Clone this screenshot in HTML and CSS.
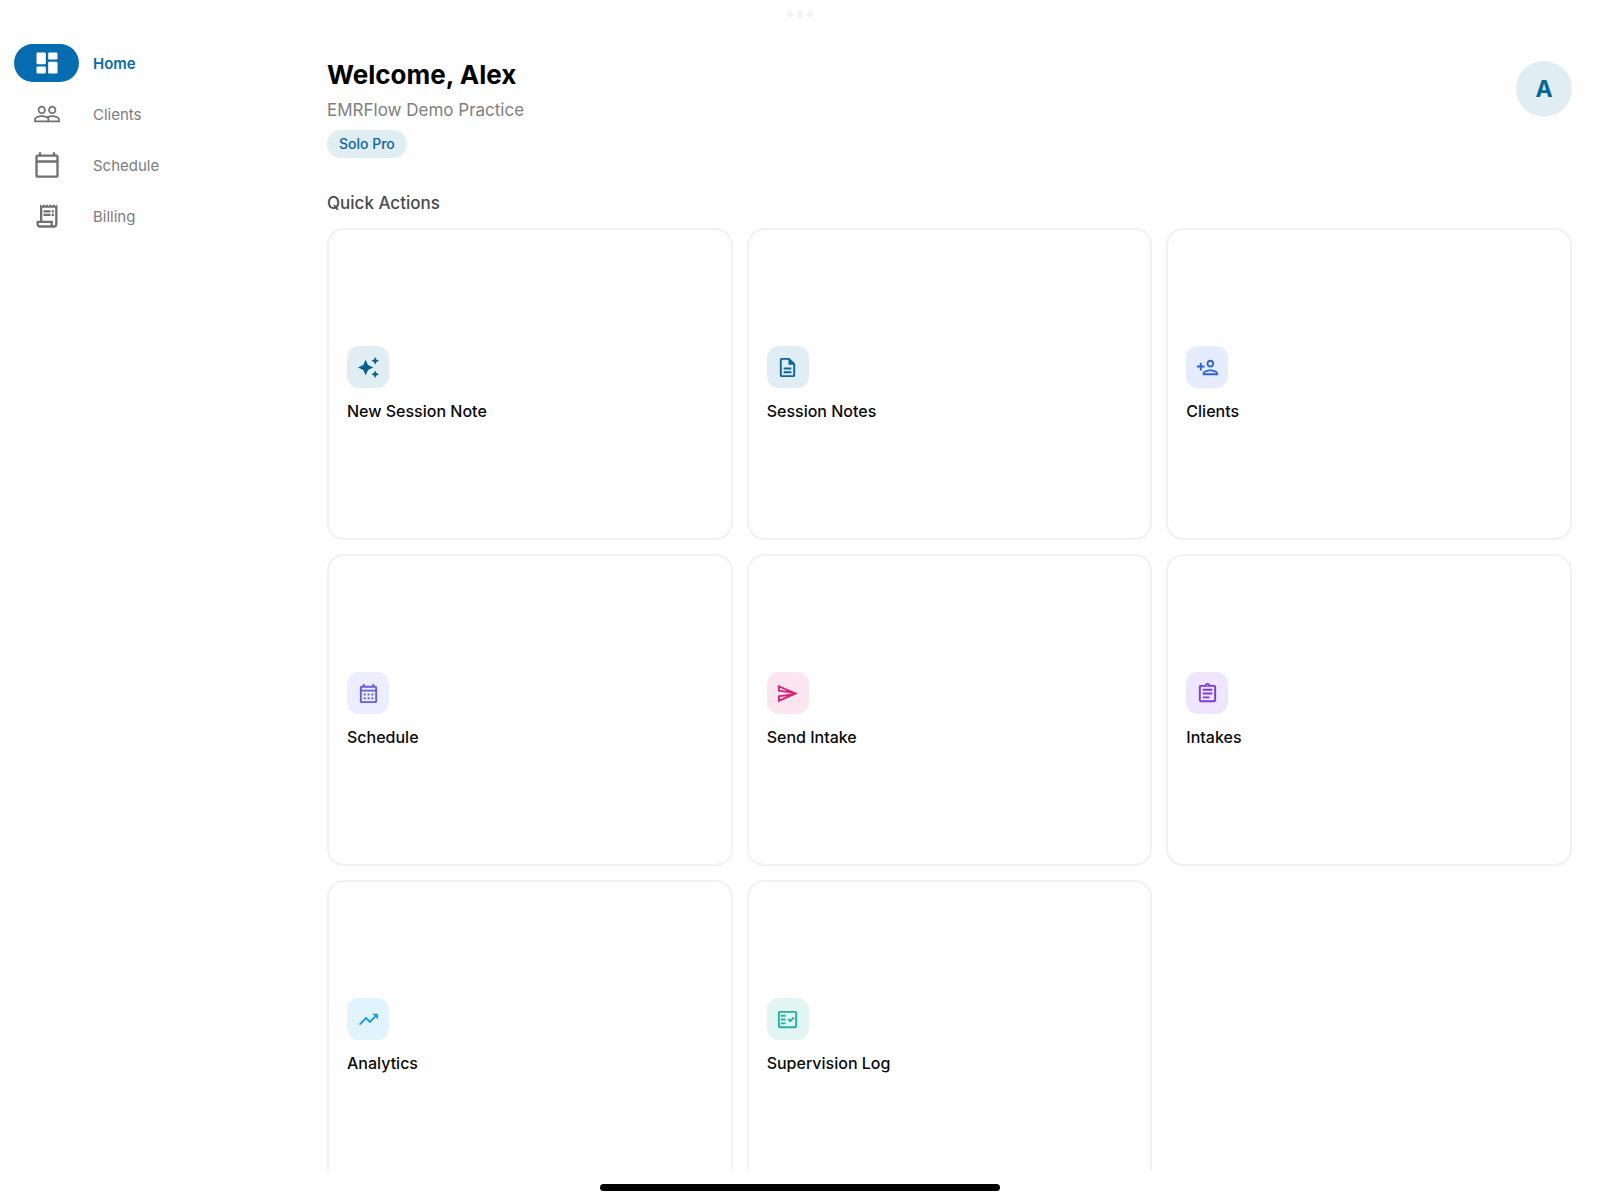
FILE: index.html
```html
<!DOCTYPE html>
<html lang="en">
<head>
    <meta charset="UTF-8">
    <meta name="viewport" content="width=device-width, initial-scale=1.0">
    <title>EMRFlow - Home</title>
    <link rel="stylesheet" href="styles.css">
</head>
<body>
    <div class="window-dots"><span></span><span></span><span></span></div>

    <div class="app">
        <nav class="sidebar">
            <a href="#home" class="nav-item active">
                <span class="nav-icon">
                    <svg viewBox="0 0 24 24"><rect x="3" y="3" width="8" height="10" rx="1"/><rect x="3" y="15" width="8" height="6" rx="1"/><rect x="13" y="3" width="8" height="6" rx="1"/><rect x="13" y="11" width="8" height="10" rx="1"/></svg>
                </span>
                Home
            </a>
            <a href="#clients" class="nav-item">
                <span class="nav-icon">
                    <svg viewBox="0 0 24 24"><path d="M16.5 13c-1.2 0-3.07.34-4.5 1-1.43-.67-3.3-1-4.5-1C5.33 13 1 14.08 1 16.25V19h22v-2.75c0-2.17-4.33-3.25-6.5-3.25zm-4 4.5h-10v-1.25c0-.54 2.56-1.75 5-1.75s5 1.21 5 1.75v1.25zm9 0H14v-1.25c0-.46-.2-.86-.52-1.22.88-.3 1.96-.53 3.02-.53 2.44 0 5 1.21 5 1.75v1.25zM7.5 12c1.93 0 3.5-1.57 3.5-3.5S9.43 5 7.5 5 4 6.57 4 8.5 5.57 12 7.5 12zm0-5.5c1.1 0 2 .9 2 2s-.9 2-2 2-2-.9-2-2 .9-2 2-2zm9 5.5c1.93 0 3.5-1.57 3.5-3.5S18.43 5 16.5 5 13 6.57 13 8.5s1.57 3.5 3.5 3.5zm0-5.5c1.1 0 2 .9 2 2s-.9 2-2 2-2-.9-2-2 .9-2 2-2z"/></svg>
                </span>
                Clients
            </a>
            <a href="#schedule" class="nav-item">
                <span class="nav-icon">
                    <svg viewBox="0 0 24 24"><path d="M20 3h-1V1h-2v2H7V1H5v2H4c-1.1 0-2 .9-2 2v16c0 1.1.9 2 2 2h16c1.1 0 2-.9 2-2V5c0-1.1-.9-2-2-2zm0 18H4V10h16v11zm0-13H4V5h16v3z"/></svg>
                </span>
                Schedule
            </a>
            <a href="#billing" class="nav-item">
                <span class="nav-icon">
                    <svg viewBox="0 0 24 24"><path d="M19.5 3.5L18 2l-1.5 1.5L15 2l-1.5 1.5L12 2l-1.5 1.5L9 2 7.5 3.5 6 2v14H3v3c0 1.66 1.34 3 3 3h12c1.66 0 3-1.34 3-3V2l-1.5 1.5zM15 20H6c-.55 0-1-.45-1-1v-1h10v2zm4-1c0 .55-.45 1-1 1s-1-.45-1-1v-3H8V5h11v14z"/><path d="M9 7h6v2H9zM16 7h2v2h-2zM9 10h6v2H9zM16 10h2v2h-2z"/></svg>
                </span>
                Billing
            </a>
        </nav>

        <main class="content">
            <header class="header">
                <div>
                    <h1>Welcome, Alex</h1>
                    <p class="practice">EMRFlow Demo Practice</p>
                    <span class="plan">Solo Pro</span>
                </div>
                <button class="avatar" aria-label="Account">A</button>
            </header>

            <h2>Quick Actions</h2>
            <div class="actions">
                <button class="card">
                    <span class="tile teal"><svg viewBox="0 0 24 24"><path d="M19 9l1.25-2.75L23 5l-2.75-1.25L19 1l-1.25 2.75L15 5l2.75 1.25L19 9zm-7.5.5L9 4 6.5 9.5 1 12l5.5 2.5L9 20l2.5-5.5L17 12l-5.5-2.5zM19 15l-1.25 2.75L15 19l2.75 1.25L19 23l1.25-2.75L23 19l-2.75-1.25L19 15z"/></svg></span>
                    New Session Note
                </button>
                <button class="card">
                    <span class="tile ocean"><svg viewBox="0 0 24 24"><path d="M8 16h8v2H8zm0-4h8v2H8zm6-10H6c-1.1 0-2 .9-2 2v16c0 1.1.89 2 1.99 2H18c1.1 0 2-.9 2-2V8l-6-6zm4 18H6V4h7v5h5v11z"/></svg></span>
                    Session Notes
                </button>
                <button class="card">
                    <span class="tile blue"><svg viewBox="0 0 24 24"><path d="M15 12c2.21 0 4-1.79 4-4s-1.79-4-4-4-4 1.79-4 4 1.79 4 4 4zm0-6c1.1 0 2 .9 2 2s-.9 2-2 2-2-.9-2-2 .9-2 2-2zm0 8c-2.67 0-8 1.34-8 4v2h16v-2c0-2.66-5.33-4-8-4zm-6 4c.22-.72 3.31-2 6-2 2.7 0 5.8 1.29 6 2H9zm-3-3v-3h3v-2H6V7H4v3H1v2h3v3h2z"/></svg></span>
                    Clients
                </button>
                <button class="card">
                    <span class="tile indigo"><svg viewBox="0 0 24 24"><path d="M19 4h-1V2h-2v2H8V2H6v2H5c-1.11 0-1.99.9-1.99 2L3 20c0 1.1.89 2 2 2h14c1.1 0 2-.9 2-2V6c0-1.1-.9-2-2-2zm0 16H5V10h14v10zm0-12H5V6h14v2zM9 14H7v-2h2v2zm4 0h-2v-2h2v2zm4 0h-2v-2h2v2zm-8 4H7v-2h2v2zm4 0h-2v-2h2v2zm4 0h-2v-2h2v2z"/></svg></span>
                    Schedule
                </button>
                <button class="card">
                    <span class="tile pink"><svg viewBox="0 0 24 24"><path d="M4.01 6.03l7.51 3.22-7.52-1 .01-2.22m7.5 8.72L4 17.97v-2.22l7.51-1M2.01 3L2 10l15 2-15 2 .01 7L23 12 2.01 3z"/></svg></span>
                    Send Intake
                </button>
                <button class="card">
                    <span class="tile purple"><svg viewBox="0 0 24 24"><path d="M7 15h7v2H7zm0-4h10v2H7zm0-4h10v2H7zm12-4h-4.18C14.4 1.84 13.3 1 12 1c-1.3 0-2.4.84-2.82 2H5c-.14 0-.27.01-.4.04-.39.08-.74.28-1.01.55-.18.18-.33.4-.43.64-.1.23-.16.49-.16.77v14c0 .27.06.54.16.78s.25.45.43.64c.27.27.62.47 1.01.55.13.02.26.03.4.03h14c1.1 0 2-.9 2-2V5c0-1.1-.9-2-2-2zm-7-.25c.41 0 .75.34.75.75s-.34.75-.75.75-.75-.34-.75-.75.34-.75.75-.75zM19 19H5V5h14v14z"/></svg></span>
                    Intakes
                </button>
                <button class="card">
                    <span class="tile sky"><svg viewBox="0 0 24 24"><path d="M16 6l2.29 2.29-4.88 4.88-4-4L2 16.59 3.41 18l6-6 4 4 6.3-6.29L22 12V6z"/></svg></span>
                    Analytics
                </button>
                <button class="card">
                    <span class="tile green"><svg viewBox="0 0 24 24"><path d="M20 3H4c-1.1 0-2 .9-2 2v14c0 1.1.9 2 2 2h16c1.1 0 2-.9 2-2V5c0-1.1-.9-2-2-2zm0 16H4V5h16v14z"/><path d="M19.41 10.42L17.99 9l-3.17 3.17-1.41-1.42L12 12.16 14.82 15zM5 7h5v2H5zM5 11h5v2H5zM5 15h5v2H5z"/></svg></span>
                    Supervision Log
                </button>
            </div>
        </main>
    </div>

    <footer class="home-bar"><span></span></footer>
</body>
</html>
```

FILE: styles.css
```css
* {
    box-sizing: border-box;
}
body {
    margin: 0;
    height: 100vh;
    display: flex;
    flex-direction: column;
    background: #fefefe;
    color: #0a0a0a;
    font-family: Inter, "Liberation Sans", sans-serif;
}
h1, h2, p {
    margin: 0;
}
button {
    font-family: inherit;
    border: none;
    cursor: pointer;
}
svg {
    display: block;
    fill: currentColor;
}

.window-dots {
    display: flex;
    justify-content: center;
    gap: 4px;
    height: 28px;
    align-items: center;
}
.window-dots span {
    width: 6px;
    height: 6px;
    border-radius: 50%;
    background: #f3f3f3;
}

.app {
    flex: 1;
    min-height: 0;
    display: flex;
}

/* sidebar */
.sidebar {
    width: 299px;
    flex-shrink: 0;
    padding: 16px 14px;
    display: flex;
    flex-direction: column;
    gap: 13px;
}
.nav-item {
    display: flex;
    align-items: center;
    gap: 14px;
    color: #7d7d7d;
    font-size: 15px;
    text-decoration: none;
}
.nav-icon {
    width: 65px;
    height: 38px;
    border-radius: 19px;
    display: flex;
    align-items: center;
    justify-content: center;
    color: #707070;
}
.nav-icon svg {
    width: 28px;
    height: 28px;
}
.nav-item.active {
    color: #086bac;
    font-weight: 600;
}
.nav-item.active .nav-icon {
    background: #066cb0;
    color: #fff;
}

/* main area */
.content {
    flex: 1;
    padding: 33px 28px;
    overflow-y: auto;
    scrollbar-width: none;
}
.header {
    display: flex;
    justify-content: space-between;
    align-items: flex-start;
}
h1 {
    font-size: 26px;
    line-height: 28px;
    font-weight: 700;
    color: #000;
}
.practice {
    margin-top: 10px;
    font-size: 17px;
    line-height: 22px;
    color: #808080;
}
.plan {
    display: block;
    width: fit-content;
    margin-top: 9px;
    padding: 0 12px;
    border-radius: 14px;
    background: #e0edf3;
    color: #0c6699;
    font-size: 14px;
    line-height: 28px;
    font-weight: 500;
}
.avatar {
    width: 56px;
    height: 56px;
    padding: 0;
    border-radius: 50%;
    background: #e0edf3;
    color: #076595;
    font-size: 23px;
    font-weight: 700;
}
h2 {
    margin: 33px 0 13px;
    font-size: 17px;
    line-height: 24px;
    font-weight: 500;
    color: #4a4a4a;
}

.actions {
    display: grid;
    grid-template-columns: repeat(3, 1fr);
    gap: 14px;
}
.card {
    aspect-ratio: 1.3;
    padding: 0 18px;
    display: flex;
    flex-direction: column;
    justify-content: center;
    align-items: flex-start;
    gap: 12px;
    background: #fefefe;
    border: 2px solid #f1f1f1;
    border-radius: 17px;
    color: #0a0a0a;
    font-size: 16px;
    line-height: 22px;
    font-weight: 500;
}
.tile {
    width: 42px;
    height: 42px;
    border-radius: 12px;
    display: flex;
    align-items: center;
    justify-content: center;
}
.tile svg {
    width: 23px;
    height: 23px;
}
.teal { background: #e0edf2; color: #06608f; }
.ocean { background: #e0edf5; color: #0a669c; }
.blue { background: #e5ecfd; color: #2f63d8; }
.indigo { background: #ecedfd; color: #6260d8; }
.pink { background: #fbe5ef; color: #d62478; }
.purple { background: #efe6fd; color: #7a3bdb; }
.sky { background: #e1f3fc; color: #219cdb; }
.green { background: #e2f5f3; color: #20b2a2; }

/* bottom home indicator */
.home-bar {
    height: 30px;
    padding-top: 14px;
    display: flex;
    justify-content: center;
}
.home-bar span {
    width: 25%;
    height: 7px;
    border-radius: 4px;
    background: #000;
}
```
